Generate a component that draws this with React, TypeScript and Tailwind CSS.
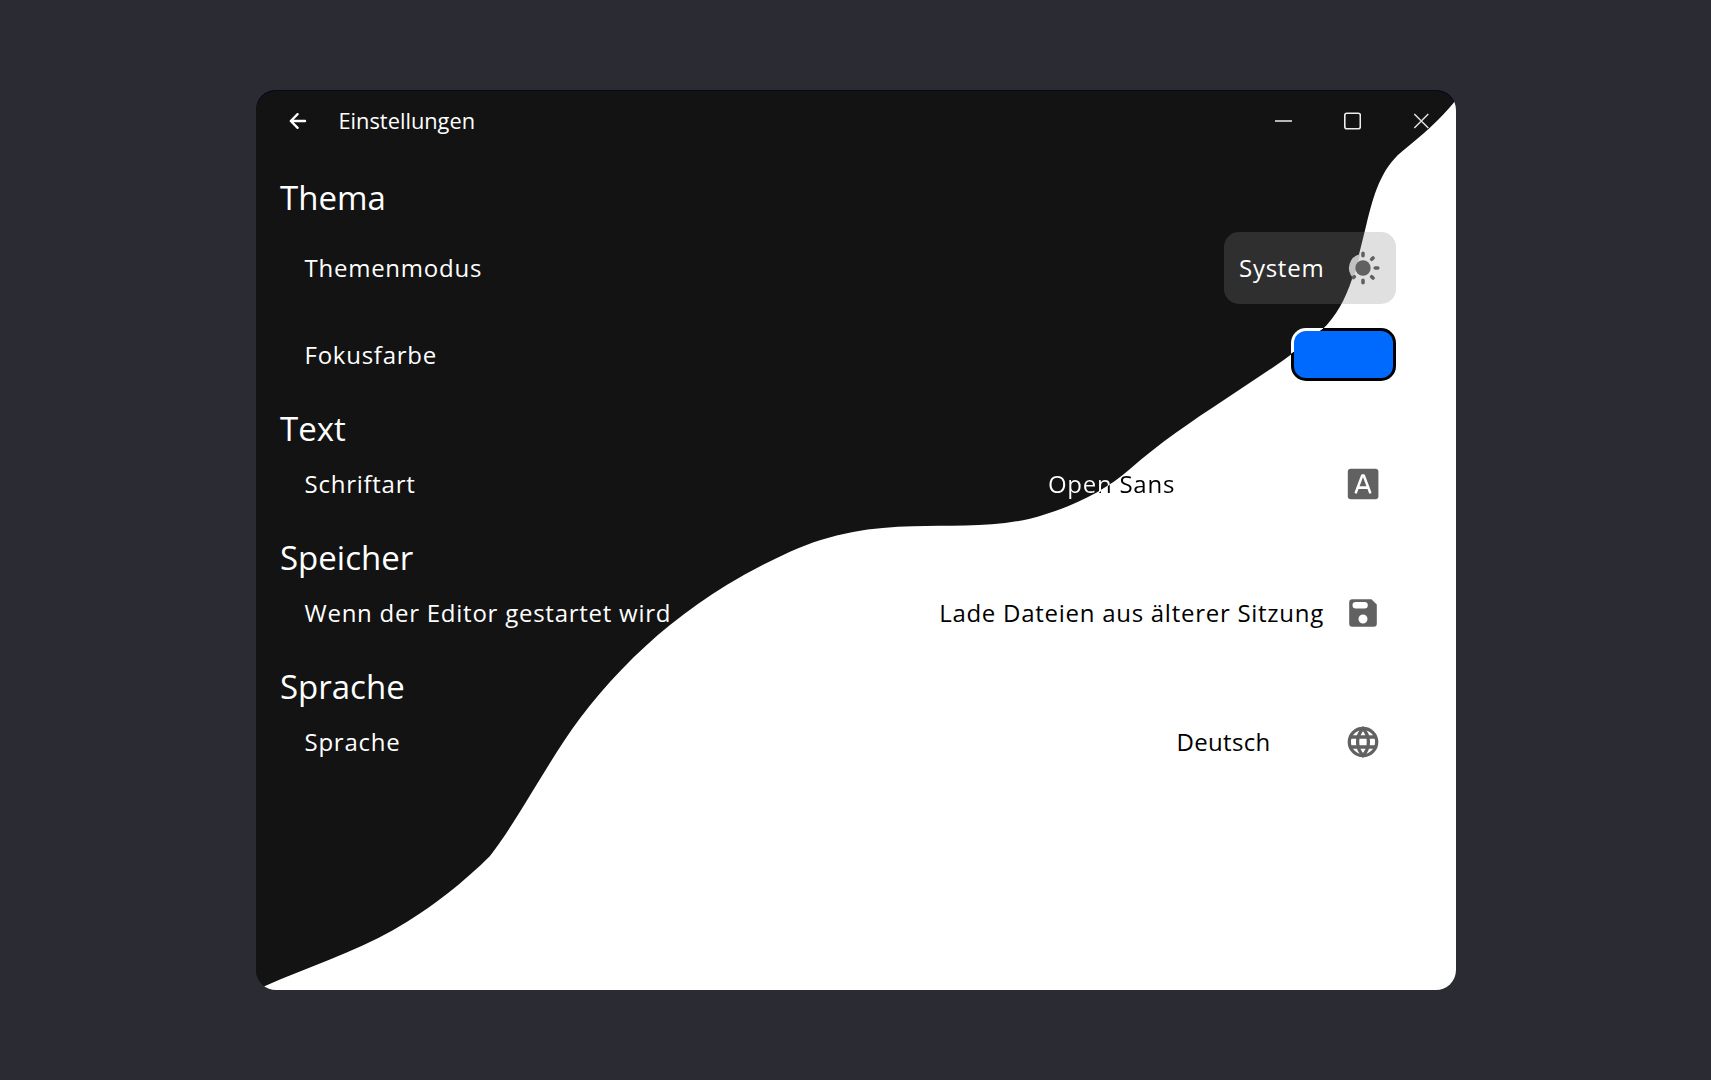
import React from "react";

const valueText = "text-[24px] leading-[36px] whitespace-nowrap";

const Row = ({ label, className, children }: { label: string; className: string; children?: React.ReactNode }) => (
  <div className={`flex items-center justify-between pl-[24.5px] ${className}`}>
    <span className="text-[24px] leading-[36px] tracking-[0.75px] text-white">{label}</span>
    {children}
  </div>
);

const Heading = ({ children }: { children: React.ReactNode }) => (
  <h2 className="text-[33px] leading-[48px] text-white">{children}</h2>
);

const Option = ({ width, textClass, text, icon }: { width: string; textClass: string; text: string; icon: React.ReactNode }) => (
  <button className="flex items-center gap-[22px] pr-4">
    <span className={`flex justify-center ${width}`}>
      <span className={`${valueText} ${textClass}`}>{text}</span>
    </span>
    {icon}
  </button>
);

const SunIcon = () => (
  <svg width="34" height="34" viewBox="-17 -17 34 34">
    <path d="M-3 -13.7A14 14 0 0 0 -10 9.8C-7 3 -5 -5 -3 -13.7Z" fill="#c2c2c2" />
    <circle r="7.7" fill="#616161" />
    <g stroke="#616161" strokeWidth="3.6" strokeLinecap="round">
      <path d="M0 -14.8V-12.2M0 12.2V14.8M12.2 0H14.8M8.7 -8.7L10 -10M8.7 8.7L10 10M-8.7 8.7L-9.6 9.6" />
    </g>
  </svg>
);

const FontIcon = () => (
  <svg width="34" height="34" viewBox="0 0 34 34">
    <rect x="1.8" y="1.8" width="30.6" height="30.4" rx="3" fill="#616161" />
    <path d="M9.9 25.4L16.2 8.6H17.8L24.1 25.4M12.3 20.6H21.7" fill="none" stroke="#fff" strokeWidth="2.6" strokeLinecap="round" strokeLinejoin="round" />
  </svg>
);

const SaveIcon = () => (
  <svg width="34" height="34" viewBox="0 0 34 34">
    <path
      fill="#616161"
      fillRule="evenodd"
      d="M5.8 3.2H25.4L30.8 8.6V27.8a3 3 0 0 1-3 3H6.2a3 3 0 0 1-3-3V6A2.9 2.9 0 0 1 5.8 3.2ZM9.8 6a3.3 3.3 0 0 0 0 6.6H18.5a3.3 3.3 0 0 0 0-6.6ZM17 18.5a4.5 4.5 0 1 0 0 9a4.5 4.5 0 0 0 0-9Z"
    />
  </svg>
);

const GlobeIcon = () => (
  <svg width="34" height="34" viewBox="-17 -17 34 34" fill="none" stroke="#616161" strokeWidth="3.3">
    <circle r="13.7" />
    <path d="M0 -13.5C-7.2 -6 -7.2 6 0 13.5C7.2 6 7.2 -6 0 -13.5ZM-12.6 -5H12.6M-12.6 5H12.6" />
  </svg>
);

// Edge between the dark and the light half of the window, in window coordinates.
const edge =
  "M1200 10C1184 30 1165.2 46 1145.7 61.7C1124.7 78.7 1117.2 107 1110.7 133.3C1106 152.2 1101.7 171.5 1095.7 190C1089.7 208 1080 227.3 1065.7 240C1035.7 266.8 1001.2 287.6 968 310C934.8 331.8 903.2 353.3 874 379C846.2 403.4 810 419.5 774 428.7C736 437.5 696 435.2 657 436.3C637 436.8 616 438.5 597 441.9C575 446 554 452.6 534 461.7C512 471.7 491 483 470.7 495C451 506.7 432.5 520.5 414 535C380.5 562 350 594 324 628.3C293.4 669 262 730 234 766C210 790 176 818 137.3 840C96.4 863 52 877 9 896L0 900H1200Z";

export default function App() {
  return (
    <div className="flex h-[1080px] w-full items-center justify-center bg-[#2b2b34] pl-px font-['Open_Sans',sans-serif]">
      <main className="relative isolate h-[900px] w-[1200px] overflow-hidden rounded-[20px] bg-[#131313] shadow-[inset_0_1px_0_#020a1c]">
        <svg className="absolute inset-0 -z-10" width="1200" height="900" viewBox="0 0 1200 900">
          <path d={edge} fill="#fff" />
        </svg>
        <header className="flex h-[62px] items-center justify-between pr-[26px] pl-[33px]">
          <div className="flex items-center">
            <svg width="18" height="18" viewBox="0 0 18 18" fill="none" stroke="#fff" strokeWidth="2.4" strokeLinecap="round" strokeLinejoin="round">
              <path d="M16 9H2M8.6 2.2L1.8 9l6.8 6.8" />
            </svg>
            <h1 className="mb-px pl-[31.5px] text-[21.8px] leading-[32px] text-white">Einstellungen</h1>
          </div>
          <div className="flex items-center gap-[52px]">
            <svg width="17" height="18" viewBox="0 0 17 18"><path d="M0 9H17" stroke="#eee" strokeWidth="1.7" /></svg>
            <svg width="17" height="18" viewBox="0 0 17 18"><rect x=".8" y="1.2" width="15.5" height="15.5" rx="2" fill="none" stroke="#eee" strokeWidth="1.6" /></svg>
            <svg width="17" height="18" viewBox="0 0 17 18"><path d="M1.3 2L15.3 16M15.3 2L1.3 16" stroke="#ddd" strokeWidth="1.5" /></svg>
          </div>
        </header>
        <div className="pt-[22px] pr-[60px] pl-6">
          <section>
            <Heading>Thema</Heading>
            <Row label="Themenmodus" className="h-[92px]">
              <button className="flex h-[72px] w-[172.5px] items-center justify-between rounded-[15px] bg-[#838383]/25 pr-4 pl-[15.5px]">
                <span className={`${valueText} tracking-[0.75px] text-white`}>System</span>
                <SunIcon />
              </button>
            </Row>
            <Row label="Fokusfarbe" className="h-[82px]">
              <span className="mb-px flex h-[53px] w-[105px] rounded-[15px] bg-[linear-gradient(141.6deg,#fff_20px,#000_20.5px)] p-[3px]">
                <span className="flex-1 rounded-[12px] bg-[#006aff]" />
              </span>
            </Row>
          </section>
          <section className="mt-[9px]">
            <Heading>Text</Heading>
            <Row label="Schriftart" className="h-[62px]">
              <Option
                width="w-[425px]"
                text="Open Sans"
                textClass="tracking-[0.75px] bg-[linear-gradient(144deg,#fff_51px,#000_52px)] bg-clip-text text-transparent"
                icon={<FontIcon />}
              />
            </Row>
          </section>
          <section className="mt-[19px]">
            <Heading>Speicher</Heading>
            <Row label="Wenn der Editor gestartet wird" className="h-[62px]">
              <Option width="w-auto" text="Lade Dateien aus älterer Sitzung" textClass="tracking-[0.73px] text-black" icon={<SaveIcon />} />
            </Row>
          </section>
          <section className="mt-[19px]">
            <Heading>Sprache</Heading>
            <Row label="Sprache" className="h-[62px]">
              <Option width="w-[201px]" text="Deutsch" textClass="tracking-[0.3px] text-black" icon={<GlobeIcon />} />
            </Row>
          </section>
        </div>
      </main>
    </div>
  );
}
